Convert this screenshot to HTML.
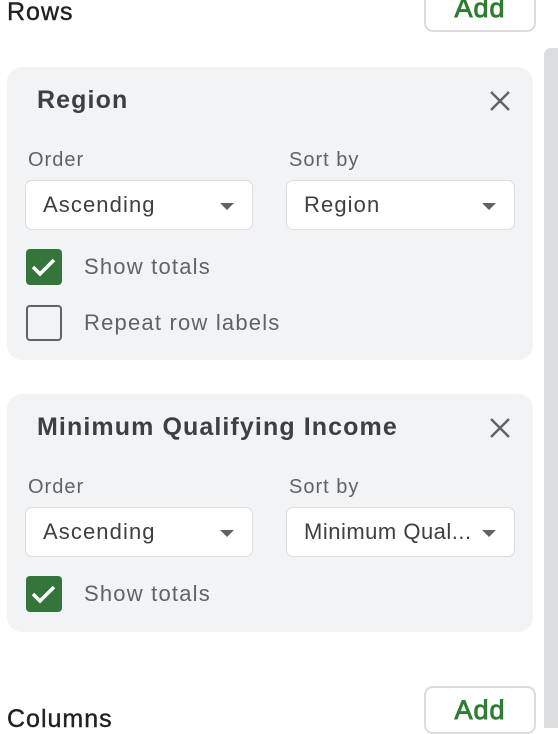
<!DOCTYPE html>
<html><head><style>
body{margin:0;width:558px;height:714px;overflow:hidden;background:#fff;font-family:"Liberation Sans",Arial,sans-serif;position:relative}
.a{position:absolute;white-space:nowrap}
.h{font-size:25px;color:#202124;letter-spacing:1px;-webkit-text-stroke:0.4px #202124}
.add{border:2px solid #dadce0;border-radius:9px;width:112px;height:48px;color:#2e7d32;font-size:27px;text-align:center;line-height:44px;box-sizing:border-box;letter-spacing:1px;-webkit-text-stroke:0.9px #2e7d32}
.card{left:7px;width:526px;background:#f1f3f4;border-radius:15px}
.t{font-size:25px;font-weight:bold;color:#3c4043;letter-spacing:1.1px}
.lbl{font-size:20px;color:#5f6368;letter-spacing:1px}
.dd{background:#fff;border:1.5px solid #dadce0;border-radius:7px;height:50px;box-sizing:border-box;font-size:22px;color:#3c4043;line-height:48px;padding-left:17px;letter-spacing:1.1px}
.dd:after{content:"";position:absolute;right:18px;top:22px;border-left:7px solid transparent;border-right:7px solid transparent;border-top:7px solid #5f6368}
.cb{width:36px;height:36px;border-radius:4px;box-sizing:border-box}
.on{background:#34753b}
.off{border:2.5px solid #5f6368}
.ct{font-size:22px;color:#5f6368;letter-spacing:1.2px}
</style></head><body>
<div class="a h" style="left:7px;top:-2px">Rows</div>
<div class="a add" style="left:424px;top:-16px">Add</div>
<div class="a" style="left:544px;top:48px;width:14px;height:680px;background:#dadce0;border-radius:7px 0 0 0"></div>

<div class="a card" style="top:67px;height:293px"></div>
<div class="a t" style="left:37px;top:86px">Region</div>
<svg class="a" style="left:488px;top:89px" width="24" height="24"><path d="M3 3L21 21M21 3L3 21" stroke="#5f6368" stroke-width="2.4"/></svg>
<div class="a lbl" style="left:28px;top:149px">Order</div>
<div class="a lbl" style="left:289px;top:149px">Sort by</div>
<div class="a dd" style="left:25px;top:180px;width:228px">Ascending</div>
<div class="a dd" style="left:286px;top:180px;width:229px">Region</div>
<div class="a cb on" style="left:26px;top:249px"><svg width="36" height="36"><path d="M7 18L14 25L28 11" stroke="#fff" stroke-width="3.5" fill="none"/></svg></div>
<div class="a ct" style="left:84px;top:254px">Show totals</div>
<div class="a cb off" style="left:26px;top:305px"></div>
<div class="a ct" style="left:84px;top:310px">Repeat row labels</div>

<div class="a card" style="top:394px;height:238px"></div>
<div class="a t" style="left:37px;top:413px">Minimum Qualifying Income</div>
<svg class="a" style="left:488px;top:416px" width="24" height="24"><path d="M3 3L21 21M21 3L3 21" stroke="#5f6368" stroke-width="2.4"/></svg>
<div class="a lbl" style="left:28px;top:476px">Order</div>
<div class="a lbl" style="left:289px;top:476px">Sort by</div>
<div class="a dd" style="left:25px;top:507px;width:228px">Ascending</div>
<div class="a dd" style="left:286px;top:507px;width:229px;letter-spacing:0.5px">Minimum Qual...</div>
<div class="a cb on" style="left:26px;top:576px"><svg width="36" height="36"><path d="M7 18L14 25L28 11" stroke="#fff" stroke-width="3.5" fill="none"/></svg></div>
<div class="a ct" style="left:84px;top:581px">Show totals</div>

<div class="a h" style="left:7px;top:705px">Columns</div>
<div class="a add" style="left:424px;top:686px">Add</div>
</body></html>
